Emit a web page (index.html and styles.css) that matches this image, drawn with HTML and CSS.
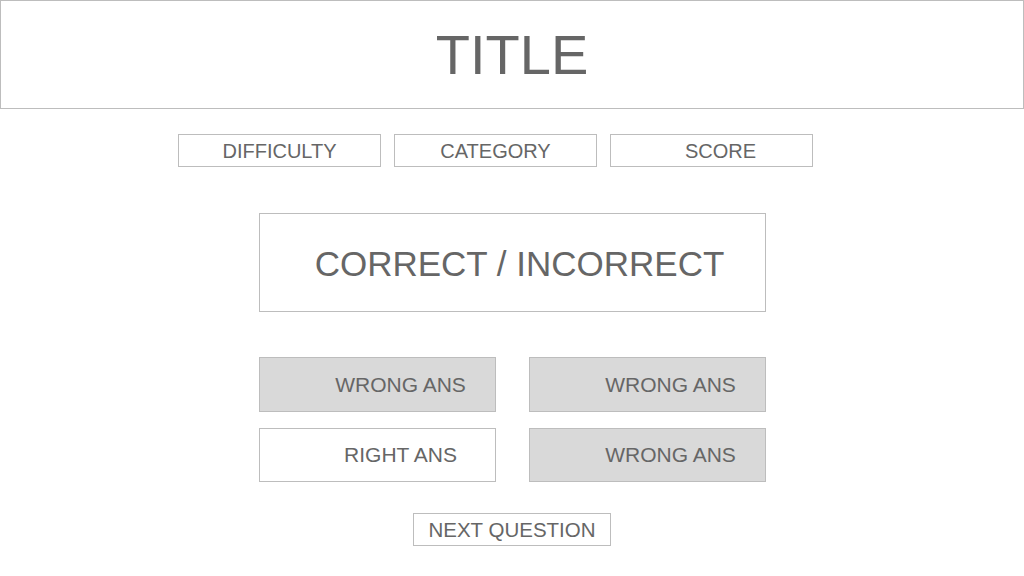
FILE: index.html
```html
<!DOCTYPE html>
<html>
<head>
<meta charset="utf-8">
<link rel="stylesheet" href="styles.css">
</head>
<body>
<header class="title-bar"><h1 class="title">TITLE</h1></header>
<div class="info-row">
  <div class="info-box">DIFFICULTY</div>
  <div class="info-box">CATEGORY</div>
  <div class="info-box score">SCORE</div>
</div>
<div class="result">CORRECT / INCORRECT</div>
<div class="answers">
  <div class="ans wrong">WRONG ANS</div>
  <div class="ans wrong">WRONG ANS</div>
  <div class="ans">RIGHT ANS</div>
  <div class="ans wrong">WRONG ANS</div>
</div>
<div class="next-wrap"><div class="next">NEXT QUESTION</div></div>
</body>
</html>
```
FILE: styles.css
```css
html, body {
  margin: 0;
  padding: 0;
  background: #fff;
}
body {
  font-family: "Liberation Sans", Arial, sans-serif;
  color: #666;
  width: 1024px;
  height: 576px;
  overflow: hidden;
}
.title-bar {
  box-sizing: border-box;
  height: 109px;
  border: 1px solid #bdbdbd;
  display: flex;
  align-items: center;
  justify-content: center;
}
.title {
  margin: 0;
  font-weight: normal;
  font-size: 56px;
  line-height: 1;
  color: #666;
}
.info-row {
  display: flex;
  gap: 13px;
  margin: 25px 0 0 178px;
}
.info-box {
  box-sizing: border-box;
  width: 203px;
  height: 33px;
  border: 1px solid #bdbdbd;
  display: flex;
  align-items: center;
  justify-content: center;
  padding-top: 2px;
  font-size: 20px;
}
.info-box.score {
  padding-left: 18px;
}
.result {
  box-sizing: border-box;
  width: 507px;
  height: 99px;
  margin: 46px 0 0 259px;
  border: 1px solid #bdbdbd;
  display: flex;
  align-items: center;
  justify-content: center;
  padding-left: 14px;
  padding-top: 2px;
  font-size: 35px;
}
.answers {
  display: grid;
  grid-template-columns: 237px 237px;
  grid-template-rows: 55px 54px;
  column-gap: 33px;
  row-gap: 16px;
  margin: 45px 0 0 259px;
}
.ans {
  box-sizing: border-box;
  border: 1px solid #bdbdbd;
  display: flex;
  align-items: center;
  justify-content: center;
  padding-left: 46px;
  font-size: 21px;
  background: #fff;
}
.ans.wrong {
  background: #d9d9d9;
}
.next-wrap {
  display: flex;
  margin: 31px 0 0 413px;
}
.next {
  box-sizing: border-box;
  width: 198px;
  height: 33px;
  border: 1px solid #bdbdbd;
  display: flex;
  align-items: center;
  justify-content: center;
  font-size: 20.5px;
}
```
